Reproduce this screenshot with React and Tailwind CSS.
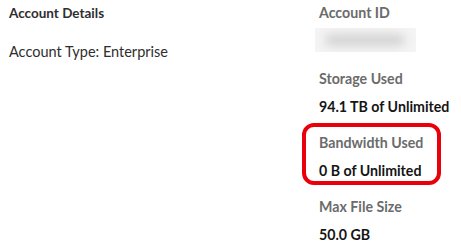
import React from 'react';

const Field = ({ label, value, highlight }) => (
  <div className="relative flex flex-col">
    {highlight && (
      <div className="absolute left-[-17px] top-[-10px] w-[139px] h-[62px] rounded-[12px] border-[4px] border-[#e8000b] pointer-events-none" />
    )}
    <div className="text-[14.2px] leading-[20px] font-bold text-[#6b6b6b]">{label}</div>
    <div className="mt-[8px] text-[14.2px] leading-[20px] font-bold text-[#151515]">{value}</div>
  </div>
);

export default function App() {
  return (
    <div
      className="w-[461px] h-[249px] bg-white flex overflow-hidden"
      style={{ fontFamily: 'Lato, "Open Sans", sans-serif' }}
    >
      {/* Left column */}
      <div className="w-[319px] pl-[9px] pt-[3px] flex flex-col">
        <div className="text-[13.5px] leading-[20px] font-bold text-[#2e2e2e]">Account Details</div>
        <div className="mt-[19px] text-[14.5px] leading-[20px] text-[#2e2e2e]">Account Type: Enterprise</div>
      </div>

      {/* Right column */}
      <div className="flex-1 pt-[3px] flex flex-col gap-[16px]">
        <div className="flex flex-col mb-[1px]">
          <div className="text-[14.2px] leading-[20px] font-bold text-[#6b6b6b]">Account ID</div>
          <div className="mt-[5px] ml-[-4px] w-[101px] h-[24px] bg-[#f4f4f4] relative overflow-hidden">
            <div className="absolute left-[10px] top-[6px] w-[80px] h-[12px] rounded-full bg-[#d4d4d4] blur-[5px]" />
          </div>
        </div>
        <Field label="Storage Used" value="94.1 TB of Unlimited" />
        <Field label="Bandwidth Used" value="0 B of Unlimited" highlight />
        <Field label="Max File Size" value="50.0 GB" />
      </div>
    </div>
  );
}
